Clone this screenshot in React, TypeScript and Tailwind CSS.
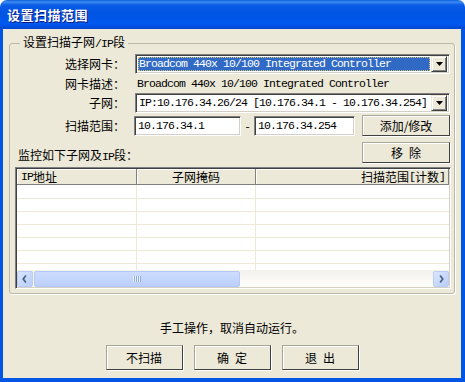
import React from 'react';

const cjk = "font-['Noto_Sans_CJK_SC',sans-serif]";
const mono = "font-['Liberation_Mono','Noto_Sans_CJK_SC',monospace] text-[11.5px] tracking-[-0.9px]";

const sunken =
  'border border-t-[#808080] border-l-[#808080] border-b-white border-r-white shadow-[inset_1px_1px_0_#404040,inset_-1px_-1px_0_#d4d0c8]';
const raised =
  'border border-t-[#a8a799] border-l-[#a8a799] border-b-[#404040] border-r-[#404040] shadow-[inset_1px_1px_0_#ffffff,1px_1px_0_#ffffff]';
const headCell = 'border-r border-b border-[#808080] shadow-[inset_1px_1px_0_#fff]';

const A: React.FC<{ children: React.ReactNode }> = ({ children }) => <span className={mono}>{children}</span>;

const DropButton: React.FC = () => (
  <div className="w-[16px] h-[16px] flex items-center justify-center bg-[#ECE9D8] border border-t-[#ECE9D8] border-l-[#ECE9D8] border-b-[#404040] border-r-[#404040] shadow-[inset_1px_1px_0_#ffffff,inset_-1px_-1px_0_#808080]">
    <svg width="7" height="4" viewBox="0 0 7 4">
      <polygon points="0,0 7,0 3.5,4" fill="#000" />
    </svg>
  </div>
);

const Select: React.FC<{ value: string; focused?: boolean }> = ({ value, focused }) => (
  <div className={`w-[315px] h-[20px] bg-white flex items-center p-[2px] ${sunken}`}>
    <div
      className={`flex-1 h-full flex items-center pl-[1px] mr-[1px] overflow-hidden ${
        focused ? 'bg-[#316AC5] text-white outline-1 outline-dotted outline-[#d8c57a] -outline-offset-1' : ''
      }`}
    >
      <span className={`${mono} whitespace-pre`}>{value}</span>
    </div>
    <DropButton />
  </div>
);

const Label: React.FC<{ children: React.ReactNode }> = ({ children }) => (
  <div className="w-[115px] text-right">{children}</div>
);

const Btn: React.FC<{ children: React.ReactNode; className?: string }> = ({ children, className }) => (
  <button className={`bg-[#ECE9D8] flex items-center justify-center whitespace-pre ${raised} ${className ?? ''}`}>
    {children}
  </button>
);

const Chevron: React.FC<{ dir: 'l' | 'r' }> = ({ dir }) => (
  <svg width="16" height="16" viewBox="0 0 16 16">
    <polyline
      points={dir === 'l' ? '9,4 6,8 9,12' : '7,4 10,8 7,12'}
      fill="none"
      stroke="#4D6185"
      strokeWidth="2"
    />
  </svg>
);

const ScrollArrow: React.FC<{ dir: 'l' | 'r' }> = ({ dir }) => (
  <div className="w-[16px] h-[16px] rounded-[2px] border border-[#B8CCF6] bg-[linear-gradient(135deg,#dbe6fd,#b9cdfa)] flex items-center justify-center">
    <Chevron dir={dir} />
  </div>
);

export default function App() {
  const rows = Array.from({ length: 7 });
  return (
    <div className={`w-[465px] h-[382px] flex flex-col text-[12px] leading-[14px] text-black ${cjk}`}>
      {/* title bar */}
      <div className="h-[29px] shrink-0 rounded-t-[7px] bg-[linear-gradient(to_bottom,#0a5fd8_0px,#3d8af2_2px,#0a5ce6_5px,#0054e3_14px,#0058ee_24px,#0046d0_29px)] flex items-center pl-[7px]">
        <span className="text-white text-[13px] font-bold tracking-[0.5px] leading-[14px] [text-shadow:1px_1px_0_#0a1883]">
          设置扫描范围
        </span>
      </div>

      {/* body */}
      <div className="flex-1 flex flex-col bg-[#ECE9D8] border-l-[3px] border-r-[4px] border-b-[4px] border-[#0055E5] pt-[6px] pl-[6px] pr-[6px]">
        <fieldset className="w-[446px] border border-[#BAB8A8] rounded-[3px] shadow-[1px_1px_0_#ffffff] pb-[4px]">
          <legend className="ml-[10px] px-[3px] leading-[14px]">
            设置扫描子网<A>/IP</A>段
          </legend>

          <div className="flex items-center h-[20px] mt-[3px]">
            <Label>选择网卡：</Label>
            <div className="ml-[10px]">
              <Select value="Broadcom 440x 10/100 Integrated Controller" focused />
            </div>
          </div>

          <div className="flex items-center h-[19px]">
            <Label>网卡描述：</Label>
            <span className={`ml-[12px] ${mono}`}>Broadcom 440x 10/100 Integrated Controller</span>
          </div>

          <div className="flex items-center h-[20px]">
            <Label>子网：</Label>
            <div className="ml-[10px]">
              <Select value="IP:10.176.34.26/24 [10.176.34.1 - 10.176.34.254]" />
            </div>
          </div>

          <div className="flex items-center h-[21px] mt-[2px]">
            <Label>扫描范围：</Label>
            <div className={`ml-[9px] w-[107px] h-[20px] bg-white flex items-center pl-[3px] ${sunken}`}>
              <span className={mono}>10.176.34.1</span>
            </div>
            <div className="w-[13px] text-center">-</div>
            <div className={`w-[101px] h-[20px] bg-white flex items-center pl-[3px] ${sunken}`}>
              <span className={mono}>10.176.34.254</span>
            </div>
            <Btn className="ml-[7px] w-[88px] h-[21px]">添加/修改</Btn>
          </div>

          <div className="flex justify-between h-[21px] mt-[6px] pr-[4px]">
            <div className="ml-[8px] mt-[6px]">
              监控如下子网及<A>IP</A>段：
            </div>
            <Btn className="w-[88px] h-[21px]">移{'\u2002'}除</Btn>
          </div>

          {/* list view */}
          <div className={`ml-[5px] mt-[4px] w-[436px] h-[122px] flex flex-col bg-white ${sunken} p-[1px]`}>
            <div className="h-[16px] shrink-0 flex bg-[#ECE9D8]">
              <div className={`w-[120px] pl-[4px] flex items-center ${headCell}`}>
                <A>IP</A>地址
              </div>
              <div className={`w-[119px] flex items-center justify-center ${headCell}`}>子网掩码</div>
              <div className={`flex-1 flex items-center justify-end pr-[3px] ${headCell}`}>
                扫描范围<A>[</A>计数<A>]</A>
              </div>
            </div>
            <div className="flex-1 overflow-hidden">
              {rows.map((_, i) => (
                <div key={i} className="h-[13px] flex border-t border-[#ECE9D8] first:border-t-0">
                  <div className="w-[120px] border-r border-[#ECE9D8]" />
                  <div className="w-[119px] border-r border-[#ECE9D8]" />
                  <div className="flex-1" />
                </div>
              ))}
            </div>
            {/* horizontal scrollbar */}
            <div className="h-[17px] shrink-0 flex items-center bg-[linear-gradient(to_bottom,#f3f1ec,#fefefb)]">
              <ScrollArrow dir="l" />
              <div className="w-[206px] h-[16px] ml-[1px] rounded-[2px] border border-[#B4C8F6] bg-[linear-gradient(to_bottom,#cddcfd,#bccffb)] flex items-center justify-center">
                <svg width="8" height="6" viewBox="0 0 8 6">
                  <rect x="0" y="0" width="1" height="6" fill="#eef3fe" />
                  <rect x="1" y="0" width="1" height="6" fill="#8caaf0" />
                  <rect x="2" y="0" width="1" height="6" fill="#eef3fe" />
                  <rect x="3" y="0" width="1" height="6" fill="#8caaf0" />
                  <rect x="4" y="0" width="1" height="6" fill="#eef3fe" />
                  <rect x="5" y="0" width="1" height="6" fill="#8caaf0" />
                  <rect x="6" y="0" width="1" height="6" fill="#eef3fe" />
                  <rect x="7" y="0" width="1" height="6" fill="#8caaf0" />
                </svg>
              </div>
              <div className="flex-1" />
              <ScrollArrow dir="r" />
            </div>
          </div>
        </fieldset>

        <div className="mt-[27px] text-center">手工操作，取消自动运行。</div>

        <div className="mt-[10px] flex justify-center gap-[11px]">
          <Btn className="w-[77px] h-[25px]">不扫描</Btn>
          <Btn className="w-[77px] h-[25px]">确{'\u2002'}定</Btn>
          <Btn className="w-[77px] h-[25px]">退{'\u2002'}出</Btn>
        </div>
      </div>
    </div>
  );
}
